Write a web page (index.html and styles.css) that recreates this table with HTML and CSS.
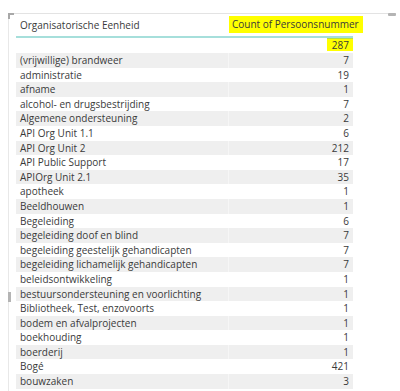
FILE: index.html
```html
<!DOCTYPE html>
<html>
<head>
<meta charset="utf-8">
<link rel="stylesheet" href="styles.css">
</head>
<body>
<div class="frame">
  <span class="corner"></span>
  <span class="handle-top"></span>
  <span class="handle-left"></span>
  <div class="table">
    <div class="head">
      <div class="c1">Organisatorische Eenheid</div>
      <div class="c2"><span class="hl">Count of Persoonsnummer</span></div>
    </div>
    <div class="total">
      <div class="c1"></div>
      <div class="c2"><span class="hl-total">287</span></div>
    </div>
    <div class="row odd"><div class="c1">(vrijwillige) brandweer</div><div class="c2">7</div></div>
    <div class="row"><div class="c1">administratie</div><div class="c2">19</div></div>
    <div class="row odd"><div class="c1">afname</div><div class="c2">1</div></div>
    <div class="row"><div class="c1">alcohol- en drugsbestrijding</div><div class="c2">7</div></div>
    <div class="row odd"><div class="c1">Algemene ondersteuning</div><div class="c2">2</div></div>
    <div class="row"><div class="c1">API Org Unit 1.1</div><div class="c2">6</div></div>
    <div class="row odd"><div class="c1">API Org Unit 2</div><div class="c2">212</div></div>
    <div class="row"><div class="c1">API Public Support</div><div class="c2">17</div></div>
    <div class="row odd"><div class="c1">APIOrg Unit 2.1</div><div class="c2">35</div></div>
    <div class="row"><div class="c1">apotheek</div><div class="c2">1</div></div>
    <div class="row odd"><div class="c1">Beeldhouwen</div><div class="c2">1</div></div>
    <div class="row"><div class="c1">Begeleiding</div><div class="c2">6</div></div>
    <div class="row odd"><div class="c1">begeleiding doof en blind</div><div class="c2">7</div></div>
    <div class="row"><div class="c1">begeleiding geestelijk gehandicapten</div><div class="c2">7</div></div>
    <div class="row odd"><div class="c1">begeleiding lichamelijk gehandicapten</div><div class="c2">7</div></div>
    <div class="row"><div class="c1">beleidsontwikkeling</div><div class="c2">1</div></div>
    <div class="row odd"><div class="c1">bestuursondersteuning en voorlichting</div><div class="c2">1</div></div>
    <div class="row"><div class="c1">Bibliotheek, Test, enzovoorts</div><div class="c2">1</div></div>
    <div class="row odd"><div class="c1">bodem en afvalprojecten</div><div class="c2">1</div></div>
    <div class="row"><div class="c1">boekhouding</div><div class="c2">1</div></div>
    <div class="row odd"><div class="c1">boerderij</div><div class="c2">1</div></div>
    <div class="row"><div class="c1">Bogé</div><div class="c2">421</div></div>
    <div class="row odd"><div class="c1">bouwzaken</div><div class="c2">3</div></div>
  </div>
</div>
</body>
</html>
```
FILE: styles.css
```css
html, body {
  margin: 0;
  padding: 0;
  background: #ffffff;
  overflow: hidden;
}
body {
  font-family: "Open Sans", "Noto Sans", sans-serif;
  font-size: 10px;
  color: #3a3a3a;
  width: 400px;
  height: 391px;
}
.frame {
  position: relative;
  margin: 13px 4px 0 8px;
  border-top: 1px solid #e3e3e3;
  border-left: 1px solid #e8e8e8;
  height: 378px;
  padding-left: 7px;
}
.corner {
  position: absolute;
  left: -1px;
  top: -1px;
  width: 6px;
  height: 6px;
  border-top: 2px solid #a8a8a8;
  border-left: 2px solid #a8a8a8;
  box-sizing: border-box;
}
.handle-top {
  position: absolute;
  right: 0;
  top: -1px;
  width: 8px;
  height: 3px;
  border-radius: 1px;
  background: #b4b4b4;
}
.handle-left {
  position: absolute;
  left: -1px;
  top: 278px;
  width: 3px;
  height: 10px;
  background: #b4b4b4;
}
.table {
  width: 337px;
}
.head, .total, .row {
  display: grid;
  grid-template-columns: 213px 124px;
}
.head {
  height: 24px;
  border-bottom: 2px solid #a6dfdb;
  box-sizing: border-box;
}
.head .c1 {
  padding-left: 4px;
  line-height: 22px;
}
.head .c2 {
  text-align: right;
  padding-top: 2px;
  white-space: nowrap;
}
.hl {
  display: inline-block;
  background: #ffff00;
  padding: 0 4px 0 3px;
  height: 17px;
  line-height: 17px;
}
.total {
  height: 15px;
}
.total .c2 {
  text-align: right;
}
.hl-total {
  display: inline-block;
  background: #ffff00;
  height: 12px;
  line-height: 12px;
  width: 22px;
  text-align: right;
  padding: 0 4px 0 0;
  border-top: 1px solid #b8e04a;
  margin-top: -1px;
}
.row {
  height: 14.6px;
  line-height: 14.6px;
}
.row.odd {
  background: #efefef;
}
.row.odd .c1 {
  border-right: 1px solid #f6f6f6;
}
.row .c1 {
  padding-left: 4px;
  white-space: nowrap;
  overflow: hidden;
}
.row .c2 {
  text-align: right;
  padding-right: 4px;
}
```
